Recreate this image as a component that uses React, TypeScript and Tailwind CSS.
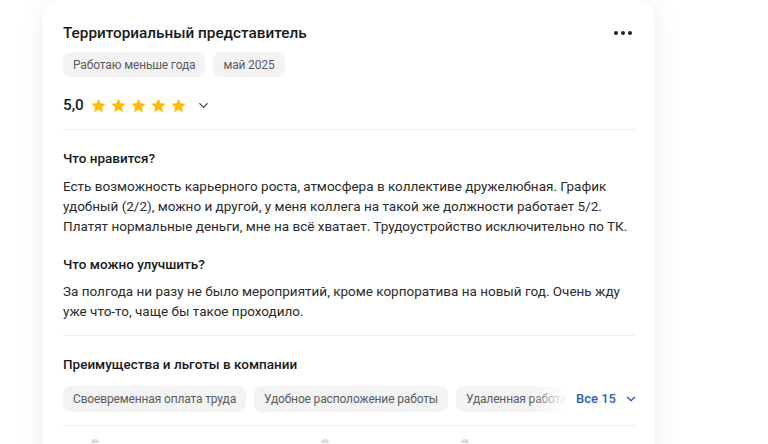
import { ChevronDown } from "lucide-react";

const Star = () => (
  <svg width="17" height="17" viewBox="0 0 24 24" className="shrink-0">
    <path
      d="M12 2.2l2.95 6.6 7.2.7-5.45 4.8 1.6 7.1L12 17.7l-6.3 3.7 1.6-7.1L1.85 9.5l7.2-.7z"
      fill="#ffbb00"
    />
  </svg>
);

const Chip = ({ children, tall }: { children: React.ReactNode; tall?: boolean }) => (
  <span
    className={`shrink-0 rounded-lg bg-[#f3f3f4] px-[10px] flex items-center text-[12px] tracking-[-0.15px] text-[#5c5c5c] whitespace-nowrap ${
      tall ? "h-[26px]" : "h-[25px]"
    }`}
  >
    {children}
  </span>
);

const App = () => {
  return (
    <div
      className="h-[444px] w-[768px] overflow-hidden bg-white text-[#1a1a1a]"
      style={{ fontFamily: "Roboto, 'Liberation Sans', sans-serif" }}
    >
      <div className="ml-[43px] w-[612px] rounded-t-2xl bg-white px-5 pt-[22px] shadow-[0_0_28px_rgba(0,0,0,0.07)] h-[500px]">
        <div className="flex items-center justify-between">
          <h2 className="text-[15.3px] font-medium leading-[22px]">Территориальный представитель</h2>
          <div className="flex gap-[3px] pr-[3px]">
            <span className="h-[4px] w-[4px] rounded-full bg-[#222]" />
            <span className="h-[4px] w-[4px] rounded-full bg-[#222]" />
            <span className="h-[4px] w-[4px] rounded-full bg-[#222]" />
          </div>
        </div>
        <div className="mt-[8px] flex gap-2">
          <Chip>Работаю меньше года</Chip>
          <Chip>май 2025</Chip>
        </div>
        <div className="mt-[17px] flex items-center h-[22px]">
          <span className="text-[15.3px] font-medium leading-[22px]">5,0</span>
          <div className="ml-[6px] flex gap-[3px]">
            <Star />
            <Star />
            <Star />
            <Star />
            <Star />
          </div>
          <ChevronDown className="ml-[9px] text-[#444]" size={15} strokeWidth={2} />
        </div>
        <div className="mt-[13px] border-t border-[#efefef]" />

        <h3 className="mt-[18px] text-[13.5px] font-medium leading-[20px]">Что нравится?</h3>
        <p className="mt-[8px] text-[13.5px] leading-[20px] text-[#2b2b2b] whitespace-nowrap">
          Есть возможность карьерного роста, атмосфера в коллективе дружелюбная. График
          <br />
          удобный (2/2), можно и другой, у меня коллега на такой же должности работает 5/2.
          <br />
          Платят нормальные деньги, мне на всё хватает. Трудоустройство исключительно по ТК.
        </p>
        <h3 className="mt-[18px] text-[13.5px] font-medium leading-[20px]">Что можно улучшить?</h3>
        <p className="mt-[7px] text-[13.5px] leading-[20px] text-[#2b2b2b] whitespace-nowrap">
          За полгода ни разу не было мероприятий, кроме корпоратива на новый год. Очень жду
          <br />
          уже что-то, чаще бы такое проходило.
        </p>
        <div className="mt-[14px] border-t border-[#efefef]" />

        <h3 className="mt-[18px] text-[13.5px] font-medium leading-[20px]">Преимущества и льготы в компании</h3>
        <div className="mt-[12px] flex items-center">
          <div className="relative flex w-[504px] shrink-0 gap-2 overflow-hidden">
            <Chip tall>Своевременная оплата труда</Chip>
            <Chip tall>Удобное расположение работы</Chip>
            <Chip tall>Удаленная работа</Chip>
            <div className="absolute right-0 top-0 h-full w-[36px] bg-gradient-to-r from-white/0 to-white" />
          </div>
          <button className="ml-[9px] flex shrink-0 items-center gap-[8px] whitespace-nowrap text-[13px] font-medium text-[#2c5fb3]">
            Все 15
            <ChevronDown size={14} strokeWidth={2.4} />
          </button>
        </div>
        <div className="mt-[13px] border-t border-[#efefef]" />
        <div className="mt-[13px] flex">
          <span className="ml-[28px] h-[4px] w-[8px] rounded-t-sm bg-[#d8dbe0]" />
          <span className="ml-[222px] h-[4px] w-[8px] rounded-t-sm bg-[#d8dbe0]" />
          <span className="ml-[132px] h-[4px] w-[8px] rounded-t-sm bg-[#d8dbe0]" />
        </div>
      </div>
    </div>
  );
};

export default App;
